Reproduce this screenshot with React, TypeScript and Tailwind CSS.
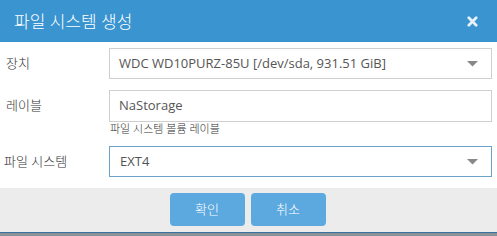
import React from "react";

const font = { fontFamily: '"Open Sans", "Noto Sans CJK KR", sans-serif' };

function Caret() {
  return (
    <svg width="11" height="6" viewBox="0 0 11 6" className="shrink-0">
      <path d="M0 0 H11 L5.5 5.5 Z" fill="#888888" />
    </svg>
  );
}

export default function App() {
  return (
    <div className="w-[497px] h-[236px] flex flex-col bg-white overflow-hidden" style={font}>
      <div className="h-[42px] shrink-0 bg-[#3a94d0] flex items-center justify-between pl-[14px] pr-[19px]">
        <span className="text-white text-[17px] leading-none font-light">파일 시스템 생성</span>
        <svg width="11" height="11" viewBox="0 0 12 12">
          <path d="M2 2 L10 10 M10 2 L2 10" stroke="#e8f2fa" strokeWidth="3" strokeLinecap="round" />
        </svg>
      </div>
      <div className="h-[146px] shrink-0 flex flex-col pt-[6px] pr-[5px] text-[13px] text-[#333]">
        <div className="flex items-center h-[31px]">
          <div className="w-[109px] pl-[6px] font-light">장치</div>
          <div className="flex-1 h-[31px] border border-[#cfcfcf] flex items-center justify-between pl-[9px] pr-[13px] text-[#555]">
            <span>WDC WD10PURZ-85U [/dev/sda, 931.51 GiB]</span>
            <Caret />
          </div>
        </div>
        <div className="flex items-center h-[32px] mt-[11px]">
          <div className="w-[109px] pl-[6px] font-light">레이블</div>
          <div className="flex-1 h-[32px] border border-[#cfcfcf] flex items-center pl-[9px] text-[#555]">
            NaStorage
          </div>
        </div>
        <div className="pl-[110px] text-[11px] leading-[13px] text-[#333] font-light">파일 시스템 볼륨 레이블</div>
        <div className="flex items-center h-[31px] mt-[11px]">
          <div className="w-[109px] pl-[4px] font-light">파일 시스템</div>
          <div className="flex-1 h-[31px] border border-[#6aa3c7] flex items-center justify-between pl-[10px] pr-[13px] text-[#555]">
            <span>EXT4</span>
            <Caret />
          </div>
        </div>
      </div>
      <div className="h-[44px] shrink-0 bg-[#ececec] flex justify-center items-start pt-[5px] gap-[6px]">
        <div className="w-[75px] h-[33px] rounded-[4px] bg-[#5ca9df] text-white text-[13px] font-light flex items-center justify-center ml-[-2px]">확인</div>
        <div className="w-[75px] h-[33px] rounded-[4px] bg-[#5ca9df] text-white text-[13px] font-light flex items-center justify-center">취소</div>
      </div>
      <div className="h-[1px] shrink-0 bg-[#3c6f9f]" />
      <div className="flex-1 bg-[#8a9299]" />
    </div>
  );
}
